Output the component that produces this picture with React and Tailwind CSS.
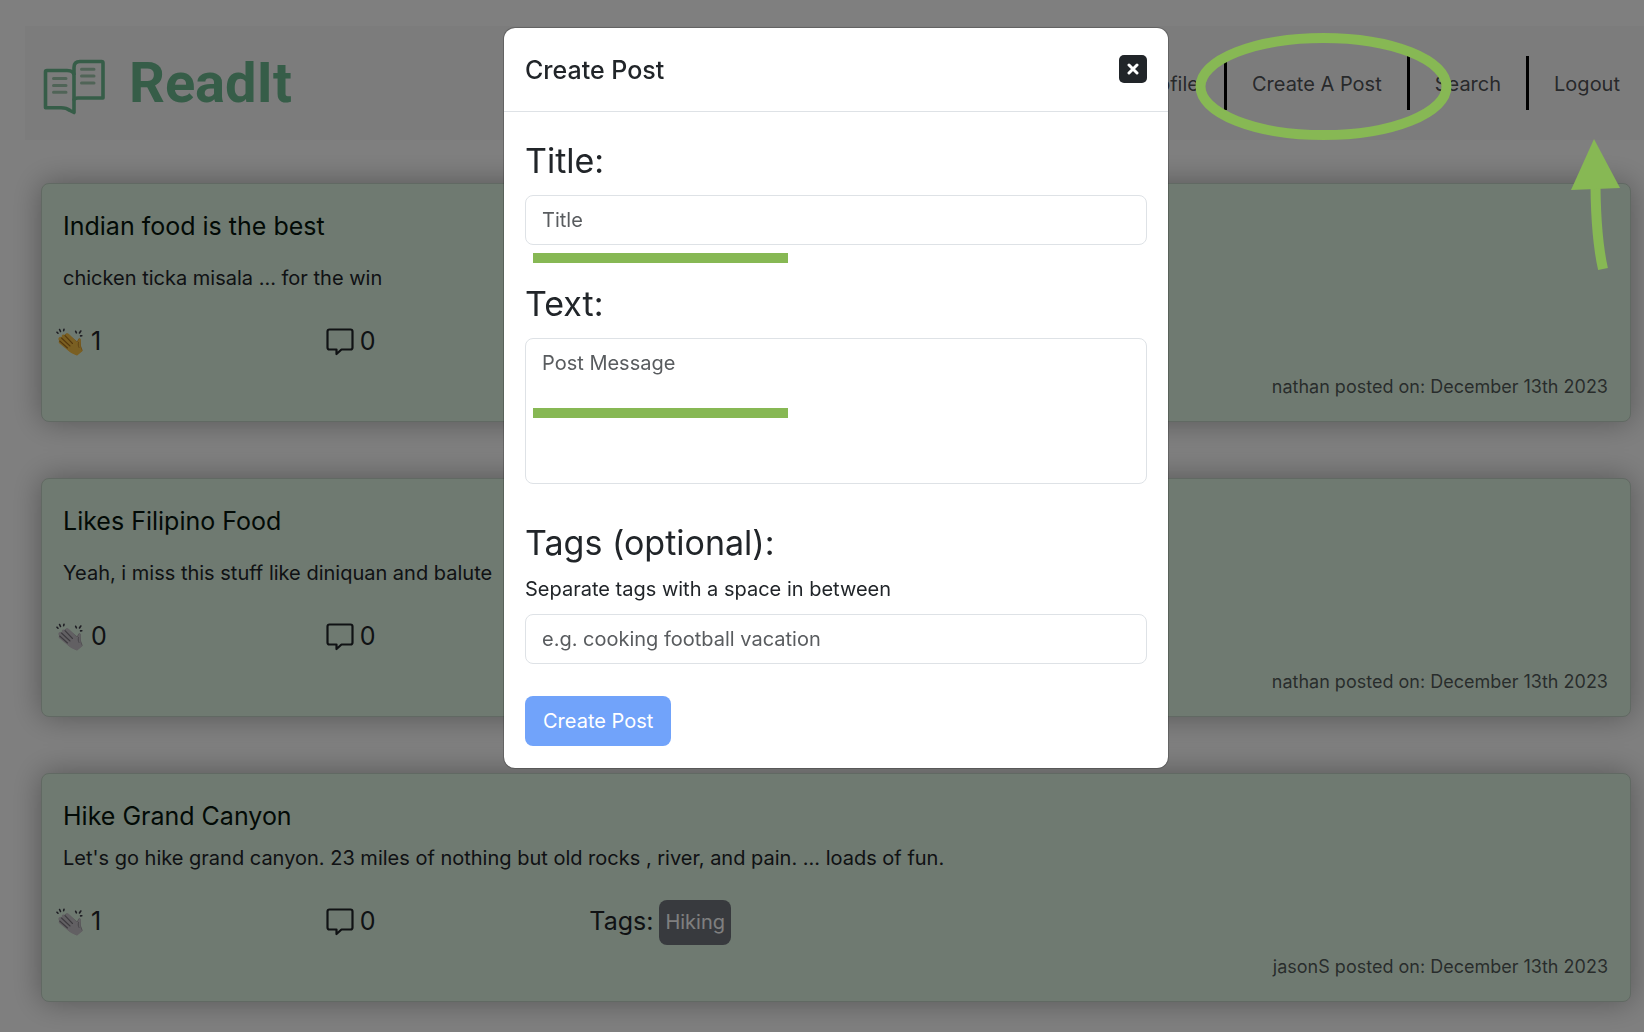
import React from "react";

const posts = [
  {
    title: "Indian food is the best",
    text: "chicken ticka misala ... for the win",
    claps: 1,
    clapped: true,
    comments: 0,
    tags: [],
    footer: "nathan posted on: December 13th 2023",
  },
  {
    title: "Likes Filipino Food",
    text: "Yeah, i miss this stuff like diniquan and balute",
    claps: 0,
    clapped: false,
    comments: 0,
    tags: [],
    footer: "nathan posted on: December 13th 2023",
  },
  {
    title: "Hike Grand Canyon",
    text: "Let's go hike grand canyon. 23 miles of nothing but old rocks , river, and pain. ... loads of fun.",
    claps: 1,
    clapped: false,
    comments: 0,
    tags: ["Hiking"],
    footer: "jasonS posted on: December 13th 2023",
  },
];

function BookLogo() {
  return (
    <svg width="62" height="56" viewBox="0 0 62 56" fill="none" stroke="#6cba90" strokeWidth="3.6" strokeLinejoin="round" aria-hidden="true">
      <path d="M31 53.500V16.500q0-5-7-5H4Q2.500 11.500 2.500 13V48.800H18q5.500 0 9 2.700z" />
      <path d="M31 41.500q0-2.500 4-2.500H60V4Q60 2.500 58.500 2.500H37Q31 2.500 31 8.500V16" />
      <g stroke="#a0c8ae" strokeWidth="3" strokeLinecap="round">
        <path d="M10.500 19.500h12.500M10.500 26.500h12.500M10.500 33.300h12.500M38.500 10.200h12.500M38.500 17h12.500M38.500 24h12.500" />
      </g>
    </svg>
  );
}

function ClapIcon({ active }) {
  const skin = active ? "#f5bf45" : "#c4c0c6";
  const shade = active ? "#a8701c" : "#78747c";
  const back = active ? "#dc9c30" : "#a29da5";
  return (
    <svg width="27" height="28" viewBox="0 0 27 28" fill="none" strokeLinecap="round" aria-hidden="true">
      <path d="M9 6.500C10.500 5 12 5.500 13.500 7L21 13.500l1.300-2.500c1-1.500 2.500-.7 2.400 1L25 18l1.700 4.500-6 4.800L13 23 3 13z" fill={back} />
      <path d="M3 9.500c1-1.300 2-1 3 0L5.700 8c.8-1.800 2.200-1.800 3.300-.7L9.800 6c1-1 2.300-.8 3.300.2l7.400 7.500c1 .8 1.500.3 1.700-.7l.4-1.400c.7-1.300 2-.8 2 .7l-.1 6.200c0 2.200 1.300 3.600 2 4.600l-5.300 4.500c-1.800-1.300-4.500-1.600-6.700-3.200L3.500 15.500c-1.300-1.300-.8-2.300 0-2.600C2 11.500 2.200 10.300 3 9.500z" fill={skin} />
      <path d="M3.700 13l7.800 7M5.500 10l8.500 8M9 7.700l7.500 7.800" stroke={shade} strokeWidth="1.100" />
      <path d="M22.500 14.500c-.5 2-.3 3.500.5 5" stroke={shade} strokeWidth=".7" />
      <path d="M1 4.200l1 1M3.600 1.500l.9 2M8 1.300l-.3 1.300M19.700 3.300l.7 1.500M24.800 3l-1.300 2M25.800 7.700l-1.200.2" stroke="#3d3d48" strokeWidth="1.600" />
    </svg>
  );
}

function CommentIcon() {
  return (
    <svg width="28" height="28" viewBox="0 0 28 28" fill="none" stroke="#212529" strokeWidth="2.200" strokeLinejoin="round" aria-hidden="true">
      <path d="M3.500 1.500H24.500Q26.500 1.500 26.500 3.500V19.500Q26.500 21.500 24.500 21.500H15.500L10.500 26V21.500H3.500Q1.500 21.500 1.500 19.500V3.500Q1.500 1.500 3.500 1.500z" />
    </svg>
  );
}

function Post({ post }) {
  return (
    <article className="rounded-lg border border-[#c3d3c6] bg-[#dff4e2] pt-[22px] pb-5 shadow-[0_0_30px_rgba(0,0,0,0.33)]">
      <h2 className="px-[21px] text-[25px] leading-[40px] text-[#05140c]">{post.title}</h2>
      <p className={`px-[21px] text-[20px] leading-8 ${post.tags.length ? "mt-1.5" : "mt-4"}`}>{post.text}</p>
      <div className="mt-[25px] grid h-[46px] grid-cols-6 items-center text-[25px]">
        <button type="button" aria-label="Clap" className="flex items-center gap-2 pl-3.5">
          <ClapIcon active={post.clapped} />
          <span>{post.claps}</span>
        </button>
        <button type="button" aria-label="Comments" className="flex items-center gap-1.5 pl-[19px]">
          <CommentIcon />
          <span>{post.comments}</span>
        </button>
        {post.tags.length > 0 && (
          <div className="flex items-center gap-1.5 pl-[18px]">
            <span>Tags:</span>
            {post.tags.map((tag) => (
              <a key={tag} href="#" className="rounded-lg bg-[#70747d] px-1.5 py-2 text-[20px] leading-[29px] text-white">
                {tag}
              </a>
            ))}
          </div>
        )}
      </div>
      <p className="mt-2 px-[22px] text-right text-[18px] leading-7 text-[#212529]/75">{post.footer}</p>
    </article>
  );
}

const inputClass =
  "block w-full rounded-lg border border-[#dee2e6] bg-white px-4 text-[20px] leading-8 text-[#212529] placeholder:text-[#595c5f]";
const labelClass = "block text-[34px] leading-[44px]";

function CreatePostDialog() {
  return (
    <div className="fixed inset-0 flex items-start justify-center bg-black/50 pt-[27px] pl-7">
      <div role="dialog" aria-labelledby="dialog-title" className="w-[666px] max-w-full rounded-xl border border-black/20 bg-white bg-clip-padding">
        <div className="flex h-[84px] items-center justify-between border-b border-[#dee2e6] px-[21px]">
          <h1 id="dialog-title" className="pt-0.5 text-[25px] font-medium">Create Post</h1>
          <button type="button" aria-label="Close" className="mb-0.5 flex size-7 items-center justify-center rounded-[5px] bg-[#212529]">
            <svg width="12" height="12" viewBox="0 0 12 12" stroke="white" strokeWidth="3" strokeLinecap="round" aria-hidden="true">
              <path d="M2 2l8 8M10 2l-8 8" />
            </svg>
          </button>
        </div>
        <form className="px-[21px] pt-[27px] pb-[22px]">
          <div className="relative">
            <label htmlFor="title" className={labelClass}>Title:</label>
            <input id="title" placeholder="Title" className={`${inputClass} mt-3 h-[50px]`} />
            <span className="absolute top-full left-2 mt-2 h-2.5 w-[255px] bg-[#87b854]" />
          </div>
          <div className="relative mt-[37px]">
            <label htmlFor="text" className={labelClass}>Text:</label>
            <textarea id="text" placeholder="Post Message" className={`${inputClass} mt-3 h-[146px] resize-none py-2`} />
            <span className="absolute bottom-[66px] left-2 h-2.5 w-[255px] bg-[#87b854]" />
          </div>
          <div className="mt-[37px]">
            <label htmlFor="tags" className={labelClass}>Tags (optional):</label>
            <p className="mt-2 text-[20px] leading-8">Separate tags with a space in between</p>
            <input id="tags" placeholder="e.g. cooking football vacation" className={`${inputClass} mt-[9px] h-[50px]`} />
          </div>
          <button type="submit" disabled className="mt-8 h-[50px] rounded-lg bg-[#71a3fa] px-[18px] text-[20px] text-white">
            Create Post
          </button>
        </form>
      </div>
    </div>
  );
}

function Annotations() {
  return (
    <svg className="pointer-events-none fixed top-0 right-0" width="460" height="280" viewBox="0 0 460 280" fill="none" stroke="#87b854" strokeWidth="10" aria-hidden="true">
      <ellipse cx="139.500" cy="86.500" rx="123" ry="48.500" />
      <path d="M411.500 186Q412 238 419 269" />
      <path d="M410 139L387 190L436 188z" fill="#87b854" stroke="none" />
    </svg>
  );
}

const links = ["Profile", "Create A Post", "Search", "Logout"];

export default function App() {
  return (
    <div className="min-h-screen bg-white pt-[26px] pb-[31px] pl-[25px] font-['Inter',sans-serif] text-[#212529]">
      <header className="flex h-[114px] items-center justify-between bg-[#f8f8f8]">
        <a href="#" className="flex items-center gap-6 pt-[7px] pl-[18px]">
          <BookLogo />
          <span className="pb-2 font-['Roboto',sans-serif] text-[56px] leading-[60px] font-bold text-[#6cba90]">ReadIt</span>
        </a>
        <nav className="flex divide-x-[3px] divide-black">
          {links.map((link) => (
            <a key={link} href="#" className="px-[25px] pt-0.5 text-[20px] leading-[52px] text-[#212529]/80 last:pr-6">{link}</a>
          ))}
        </nav>
      </header>
      <main className="mt-[43px] mr-[13px] ml-4 flex flex-col gap-14">
        {posts.map((post) => (
          <Post key={post.title} post={post} />
        ))}
      </main>
      <CreatePostDialog />
      <Annotations />
    </div>
  );
}
